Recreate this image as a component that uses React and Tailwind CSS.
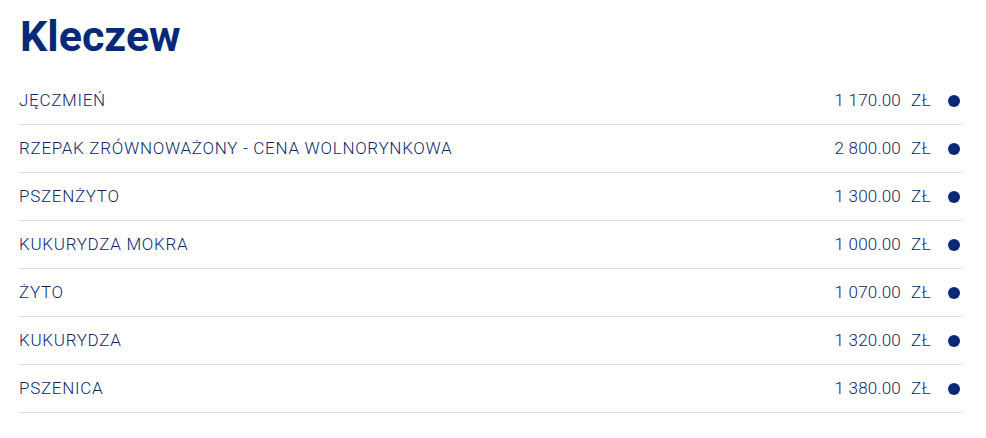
import React from "react";

const rows = [
  ["JĘCZMIEŃ", "1 170.00"],
  ["RZEPAK ZRÓWNOWAŻONY - CENA WOLNORYNKOWA", "2 800.00"],
  ["PSZENŻYTO", "1 300.00"],
  ["KUKURYDZA MOKRA", "1 000.00"],
  ["ŻYTO", "1 070.00"],
  ["KUKURYDZA", "1 320.00"],
  ["PSZENICA", "1 380.00"],
];

export default function App() {
  return (
    <div className="w-[986px] h-[438px] bg-white pl-[19px] pr-[23px] pt-[12px] text-[#0b2a6e]" style={{ fontFamily: "Roboto, 'Noto Sans', sans-serif" }}>
      <h1 className="text-[43px] font-bold leading-[48px] text-[#062a78] h-[65px] pl-[1px]">Kleczew</h1>
      <div>
        {rows.map(([name, price]) => (
          <div key={name} className="flex items-center h-[48px] border-b border-[#dcdcdc] text-[17px] font-light">
            <div className="flex-1 tracking-[0.7px]">{name}</div>
            <div className="text-right tracking-[0.2px]">{price}</div>
            <div className="ml-[10px] w-[20px] tracking-[0.5px]">ZŁ</div>
            <div className="ml-[17px] mr-[3px] w-[12px] h-[12px] rounded-full bg-[#062a78]" />
          </div>
        ))}
      </div>
    </div>
  );
}
